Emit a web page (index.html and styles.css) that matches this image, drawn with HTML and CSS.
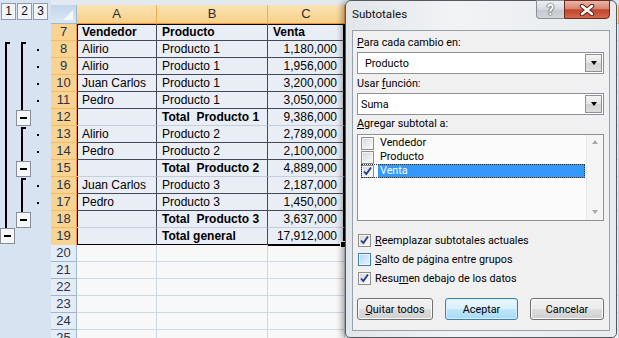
FILE: index.html
```html
<!DOCTYPE html>
<html lang="es">
<head>
    <meta charset="UTF-8">
    <meta name="viewport" content="width=device-width, initial-scale=1.0">
    <title>Subtotales</title>
    <link rel="stylesheet" href="styles.css">
</head>
<body>

<div class="sheet">
    <div class="outline">
        <div class="levels"><span>1</span><span>2</span><span>3</span></div>
        <svg class="brackets" width="51" height="314" viewBox="0 0 51 314">
            <!-- level 1 -->
            <rect x="5" y="18" width="2" height="186" fill="#000"/>
            <rect x="5" y="18" width="5" height="2" fill="#000"/>
            <rect x="0.5" y="204.5" width="14" height="15" fill="#f4f6f9" stroke="#8a8f98"/>
            <rect x="4" y="211" width="7" height="2" fill="#000"/>
            <!-- level 2 -->
            <rect x="21" y="18" width="2" height="68" fill="#000"/>
            <rect x="21" y="18" width="5" height="2" fill="#000"/>
            <rect x="16.5" y="86.5" width="14" height="15" fill="#f4f6f9" stroke="#8a8f98"/>
            <rect x="20" y="93" width="7" height="2" fill="#000"/>

            <rect x="21" y="103" width="2" height="34" fill="#000"/>
            <rect x="21" y="103" width="5" height="2" fill="#000"/>
            <rect x="16.5" y="137.5" width="14" height="15" fill="#f4f6f9" stroke="#8a8f98"/>
            <rect x="20" y="144" width="7" height="2" fill="#000"/>

            <rect x="21" y="154" width="2" height="34" fill="#000"/>
            <rect x="21" y="154" width="5" height="2" fill="#000"/>
            <rect x="16.5" y="188.5" width="14" height="15" fill="#f4f6f9" stroke="#8a8f98"/>
            <rect x="20" y="195" width="7" height="2" fill="#000"/>
            <!-- detail dots -->
            <rect x="37" y="25" width="2" height="2" fill="#000"/>
            <rect x="37" y="42" width="2" height="2" fill="#000"/>
            <rect x="37" y="59" width="2" height="2" fill="#000"/>
            <rect x="37" y="76" width="2" height="2" fill="#000"/>
            <rect x="37" y="110" width="2" height="2" fill="#000"/>
            <rect x="37" y="127" width="2" height="2" fill="#000"/>
            <rect x="37" y="161" width="2" height="2" fill="#000"/>
            <rect x="37" y="178" width="2" height="2" fill="#000"/>
        </svg>
    </div>

    <div class="grid">
        <div class="row head">
            <div class="corner"></div>
            <div class="col">A</div>
            <div class="col">B</div>
            <div class="col">C</div>
            <div class="col off"></div>
        </div>
        <div class="row sel top">
            <div class="num">7</div>
            <div class="cell a b">Vendedor</div>
            <div class="cell b">Producto</div>
            <div class="cell c b">Venta</div>
            <div class="cell"></div>
        </div>
        <div class="row sel">
            <div class="num">8</div>
            <div class="cell a">Alirio</div>
            <div class="cell">Producto 1</div>
            <div class="cell c n">1,180,000</div>
            <div class="cell"></div>
        </div>
        <div class="row sel">
            <div class="num">9</div>
            <div class="cell a">Alirio</div>
            <div class="cell">Producto 1</div>
            <div class="cell c n">1,956,000</div>
            <div class="cell"></div>
        </div>
        <div class="row sel">
            <div class="num">10</div>
            <div class="cell a">Juan Carlos</div>
            <div class="cell">Producto 1</div>
            <div class="cell c n">3,200,000</div>
            <div class="cell"></div>
        </div>
        <div class="row sel">
            <div class="num">11</div>
            <div class="cell a">Pedro</div>
            <div class="cell">Producto 1</div>
            <div class="cell c n">3,050,000</div>
            <div class="cell"></div>
        </div>
        <div class="row sel sub">
            <div class="num">12</div>
            <div class="cell a"></div>
            <div class="cell b">Total&nbsp; Producto 1</div>
            <div class="cell c n">9,386,000</div>
            <div class="cell"></div>
        </div>
        <div class="row sel">
            <div class="num">13</div>
            <div class="cell a">Alirio</div>
            <div class="cell">Producto 2</div>
            <div class="cell c n">2,789,000</div>
            <div class="cell"></div>
        </div>
        <div class="row sel">
            <div class="num">14</div>
            <div class="cell a">Pedro</div>
            <div class="cell">Producto 2</div>
            <div class="cell c n">2,100,000</div>
            <div class="cell"></div>
        </div>
        <div class="row sel sub">
            <div class="num">15</div>
            <div class="cell a"></div>
            <div class="cell b">Total&nbsp; Producto 2</div>
            <div class="cell c n">4,889,000</div>
            <div class="cell"></div>
        </div>
        <div class="row sel">
            <div class="num">16</div>
            <div class="cell a">Juan Carlos</div>
            <div class="cell">Producto 3</div>
            <div class="cell c n">2,187,000</div>
            <div class="cell"></div>
        </div>
        <div class="row sel">
            <div class="num">17</div>
            <div class="cell a">Pedro</div>
            <div class="cell">Producto 3</div>
            <div class="cell c n">1,450,000</div>
            <div class="cell"></div>
        </div>
        <div class="row sel sub">
            <div class="num">18</div>
            <div class="cell a"></div>
            <div class="cell b">Total&nbsp; Producto 3</div>
            <div class="cell c n">3,637,000</div>
            <div class="cell"></div>
        </div>
        <div class="row sel sub last">
            <div class="num">19</div>
            <div class="cell a"></div>
            <div class="cell b">Total general</div>
            <div class="cell c n handle">17,912,000</div>
            <div class="cell"></div>
        </div>
        <div class="row"><div class="num">20</div><div class="cell"></div><div class="cell"></div><div class="cell"></div><div class="cell"></div></div>
        <div class="row"><div class="num">21</div><div class="cell"></div><div class="cell"></div><div class="cell"></div><div class="cell"></div></div>
        <div class="row"><div class="num">22</div><div class="cell"></div><div class="cell"></div><div class="cell"></div><div class="cell"></div></div>
        <div class="row"><div class="num">23</div><div class="cell"></div><div class="cell"></div><div class="cell"></div><div class="cell"></div></div>
        <div class="row"><div class="num">24</div><div class="cell"></div><div class="cell"></div><div class="cell"></div><div class="cell"></div></div>
        <div class="row"><div class="num">25</div><div class="cell"></div><div class="cell"></div><div class="cell"></div><div class="cell"></div></div>
    </div>
</div>

<div class="dialog">
    <div class="titlebar">
        <span class="title">Subtotales</span>
        <div class="caption">
            <span class="help">?</span>
            <span class="close">
                <svg width="18" height="12" viewBox="0 0 18 12">
                    <path d="M4 2 L14 10 M14 2 L4 10" stroke="#5a2419" stroke-width="4.5" stroke-linecap="round"/>
                    <path d="M4 2 L14 10 M14 2 L4 10" stroke="#fff" stroke-width="2.5" stroke-linecap="round"/>
                </svg>
            </span>
        </div>
    </div>
    <div class="client">
        <div class="label"><u>P</u>ara cada cambio en:</div>
        <div class="combo first">
            <span class="value">Producto</span>
            <span class="drop"><i></i></span>
        </div>
        <div class="label">Usar <u>f</u>unción:</div>
        <div class="combo">
            <span class="value">Suma</span>
            <span class="drop"><i></i></span>
        </div>
        <div class="label"><u>A</u>gregar subtotal a:</div>
        <div class="listbox">
            <div class="items">
                <div class="item"><span class="chk"></span><span class="text">Vendedor</span></div>
                <div class="item"><span class="chk"></span><span class="text">Producto</span></div>
                <div class="item active">
                    <span class="chk">
                        <svg width="11" height="11" viewBox="0 0 11 11"><path d="M2 5.5 L4.3 8 L9 1.5" stroke="#223b86" stroke-width="1.8" fill="none"/></svg>
                    </span>
                    <span class="text">Venta</span>
                </div>
            </div>
            <div class="scroll">
                <span class="arrow up"></span>
                <span class="arrow down"></span>
            </div>
        </div>
        <div class="option">
            <span class="chk">
                <svg width="11" height="11" viewBox="0 0 11 11"><path d="M2 5.5 L4.3 8 L9 1.5" stroke="#223b86" stroke-width="1.8" fill="none"/></svg>
            </span>
            <span><u>R</u>eemplazar subtotales actuales</span>
        </div>
        <div class="option">
            <span class="chk hot"></span>
            <span><u>S</u>alto de página entre grupos</span>
        </div>
        <div class="option">
            <span class="chk">
                <svg width="11" height="11" viewBox="0 0 11 11"><path d="M2 5.5 L4.3 8 L9 1.5" stroke="#223b86" stroke-width="1.8" fill="none"/></svg>
            </span>
            <span>Resu<u>m</u>en debajo de los datos</span>
        </div>
        <div class="buttons">
            <button class="btn quitar"><u>Q</u>uitar todos</button>
            <button class="btn default">Aceptar</button>
            <button class="btn cancel">Cancelar</button>
        </div>
    </div>
</div>

</body>
</html>
```

FILE: styles.css
```css
body {
    margin: 0;
    width: 619px;
    height: 338px;
    overflow: hidden;
    position: relative;
    background-color: #e3e9f1;
    font-family: "Liberation Sans", Arial, sans-serif;
}
.sheet {
    display: flex;
    height: 338px;
}

/* outline (group levels) */
.outline {
    width: 51px;
    flex: none;
    background-color: #d8e3f1;
}
.levels {
    display: flex;
    gap: 1px;
    height: 24px;
    padding: 3px 0 0 1px;
    box-sizing: border-box;
}
.levels span {
    width: 15px;
    height: 17px;
    box-sizing: border-box;
    border: 1px solid #8d9bb0;
    background-color: #f1f5fa;
    font-size: 12px;
    line-height: 15px;
    text-align: center;
    color: #111;
}
.brackets {
    display: block;
}

/* grid */
.grid {
    flex: 1;
    padding-top: 5px;
}
.row {
    display: grid;
    grid-template-columns: 26px 80px 111px 77px 1fr;
    height: 17px;
}
.row.head {
    height: 19px;
}
.row > div {
    box-sizing: border-box;
    white-space: nowrap;
    overflow: hidden;
}
.corner {
    position: relative;
    background: linear-gradient(#c3d5ec, #dce7f5);
    border-right: 1px solid #9eb6ce;
    border-bottom: 1px solid #9eb6ce;
}
.corner::after {
    content: "";
    position: absolute;
    right: 3px;
    bottom: 3px;
    border-style: solid;
    border-width: 0 0 10px 10px;
    border-color: transparent transparent #f4f7fb transparent;
}
.col {
    background: linear-gradient(#fbe3b4, #f8d089);
    border-right: 1px solid #f1ab55;
    border-bottom: 1px solid #f29436;
    font-size: 13px;
    line-height: 18px;
    text-align: center;
    color: #2c2c2c;
}
.col.off {
    background: #e4ecf7;
    border-bottom-color: #9eb6ce;
}
.num {
    background-color: #e4ecf7;
    border-right: 1px solid #9eb6ce;
    border-bottom: 1px solid #9eb6ce;
    font-size: 13px;
    line-height: 16px;
    text-align: center;
    color: #27344a;
}
.sel .num {
    background-color: #f9d391;
    border-right-color: #f29436;
    border-bottom-color: #f1bb6e;
}
.cell {
    background-color: #f8f8f8;
    border-right: 1px solid #d0d7e5;
    border-bottom: 1px solid #d0d7e5;
    font-size: 12px;
    line-height: 16px;
    padding: 0 5px;
    color: #000;
}
.sel .cell:not(:last-child) {
    background-color: #e9edf5;
    border-right-color: #434855;
    border-bottom-color: #434855;
}
.sel.sub .cell:not(:last-child) {
    border-bottom-color: #c6cedc;
}
.sel.last .cell:not(:last-child) {
    border-bottom: 2px solid #000;
}
.sel .cell.c {
    border-right: 2px solid #000;
}
.sel .cell.a {
    box-shadow: inset 1px 0 0 #000;
}
.top .cell:not(:last-child) {
    box-shadow: inset 0 1px 0 #000;
}
.top .cell.a {
    box-shadow: inset 1px 1px 0 #000;
}
.cell.b {
    font-weight: bold;
}
.cell.n {
    text-align: right;
    padding-right: 6px;
}
.handle {
    position: relative;
    overflow: visible !important;
}
.handle::after {
    content: "";
    position: absolute;
    right: -4px;
    bottom: -4px;
    width: 5px;
    height: 5px;
    background-color: #000;
    border: 1px solid #fff;
}

/* dialog */
.dialog {
    position: absolute;
    left: 345px;
    top: 0;
    width: 272px;
    height: 338px;
    box-sizing: border-box;
    border: 1px solid #55595f;
    border-radius: 6px 6px 5px 5px;
    background: linear-gradient(90deg, #e2e6ea, #f1f3f5 40%, #e8ebee);
    box-shadow: -3px 1px 6px rgba(0, 0, 0, 0.35);
    font-family: Roboto, "Liberation Sans", sans-serif;
    font-size: 10.8px;
    color: #000;
}
.titlebar {
    height: 29px;
    display: flex;
    justify-content: space-between;
    padding-left: 6px;
    padding-right: 6px;
}
.title {
    font-size: 11.6px;
    line-height: 26px;
    color: #111;
}
.caption {
    display: flex;
    height: 19px;
    margin-top: -1px;
}
.help {
    width: 28px;
    box-sizing: border-box;
    border: 1px solid #8a9098;
    border-right: none;
    border-radius: 0 0 0 4px;
    background: linear-gradient(#eef0f3, #d6dade 50%, #c3c8ce 51%, #d2d6db);
    text-align: center;
    font-size: 14px;
    font-weight: bold;
    line-height: 18px;
    color: #fff;
    text-shadow: 0 0 2px #333, 0 0 1px #333;
}
.close {
    width: 46px;
    box-sizing: border-box;
    border: 1px solid #6d2a1e;
    border-radius: 0 0 4px 0;
    background: linear-gradient(#e9b5a8, #d88571 45%, #c2432b 52%, #d2694e);
    display: flex;
    align-items: center;
    justify-content: center;
}
.close svg {
    display: block;
}
.client {
    margin: 0 6px;
    height: 301px;
    box-sizing: border-box;
    border: 1px solid #98a0aa;
    background-color: #f0f0f0;
    padding: 4px 5px 0 4px;
}
.label {
    height: 16px;
    line-height: 16px;
}
.combo {
    height: 22px;
    box-sizing: border-box;
    border: 1px solid #8d9096;
    background-color: #fff;
    display: flex;
    justify-content: space-between;
    align-items: center;
    margin: 1px 0 1px;
}
.combo.first {
    margin-bottom: 2px;
}
.combo.first .value {
    padding-left: 7px;
}
.combo .value {
    padding-left: 3px;
}
.drop {
    width: 17px;
    height: 18px;
    margin-right: 1px;
    box-sizing: border-box;
    border: 1px solid #8e9297;
    background: linear-gradient(#f4f4f4, #e4e4e4 50%, #d3d3d3 51%, #dcdcdc);
    display: flex;
    align-items: center;
    justify-content: center;
}
.drop i {
    border-style: solid;
    border-width: 4px 3.5px 0 3.5px;
    border-color: #000 transparent transparent transparent;
}
.listbox {
    height: 87px;
    box-sizing: border-box;
    border: 1px solid #8d9096;
    background-color: #fbfbfb;
    margin-top: 2px;
    display: flex;
}
.items {
    flex: 1;
    padding: 1px 0 0 3px;
}
.item {
    height: 14px;
    display: flex;
    align-items: center;
}
.item .chk {
    margin-right: 4px;
}
.item .text {
    padding-left: 2px;
    line-height: 14px;
    flex: 1;
}
.item.active {
    outline: 1px dotted #333;
    outline-offset: -1px;
    margin-right: 1px;
}
.item.active .text {
    background-color: #3399ff;
    color: #fff;
}
.scroll {
    width: 16px;
    border-left: 1px solid #e6e6e6;
    background-color: #f5f5f5;
    display: flex;
    flex-direction: column;
    justify-content: space-between;
    align-items: center;
    padding: 5px 0 6px;
}
.arrow {
    border-style: solid;
    border-color: transparent;
}
.arrow.up {
    border-width: 0 3.5px 4px 3.5px;
    border-bottom-color: #a8a8a8;
}
.arrow.down {
    border-width: 4px 3.5px 0 3.5px;
    border-top-color: #a8a8a8;
}
.chk {
    width: 13px;
    height: 13px;
    flex: none;
    box-sizing: border-box;
    border: 1px solid #8f8f8f;
    background: linear-gradient(135deg, #d5d5d5, #fdfdfd);
    box-shadow: inset 0 0 0 1px #f4f4f4;
    display: flex;
    align-items: center;
    justify-content: center;
}
.chk.hot {
    border-color: #3c7fb1;
    background: linear-gradient(135deg, #b1d6f1, #e9f5fd);
}
.chk svg {
    display: block;
}
.option {
    height: 16px;
    display: flex;
    align-items: center;
    gap: 4px;
    margin-top: 3px;
    padding-left: 1px;
}
.listbox + .option {
    margin-top: 11px;
}
.buttons {
    display: flex;
    justify-content: space-between;
    margin-top: 12px;
}
.btn {
    height: 22px;
    box-sizing: border-box;
    border: 1px solid #707070;
    border-radius: 3px;
    background: linear-gradient(#f2f2f2, #ebebeb 50%, #dddddd 51%, #cfcfcf);
    box-shadow: inset 0 0 0 1px #fbfbfb;
    font-family: Roboto, "Liberation Sans", sans-serif;
    font-size: 10.8px;
    color: #000;
    padding: 0;
}
.btn.quitar {
    width: 76px;
}
.btn.default {
    width: 73px;
    border-color: #3c7fb1;
    background: linear-gradient(#eaf6fd, #d9f0fc 50%, #bee6fd 51%, #a7d9f5);
    box-shadow: inset 0 0 0 1px #d8eefb;
}
.btn.cancel {
    width: 74px;
}
```
